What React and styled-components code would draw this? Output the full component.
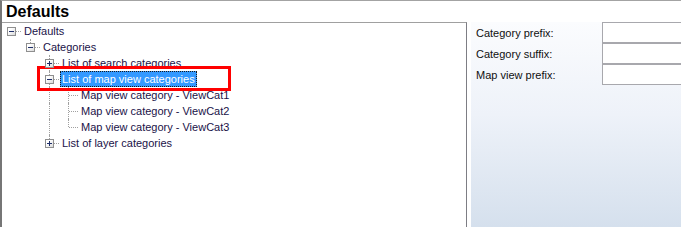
import React from 'react'
import styled, { createGlobalStyle, css } from 'styled-components'

const GlobalStyle = createGlobalStyle`
  html, body {
    margin: 0;
    padding: 0;
    background: #ffffff;
  }
  body {
    font-family: "Liberation Sans", Arial, sans-serif;
    font-size: 11px;
    overflow: hidden;
  }
`

const nodes = [
  { label: 'Defaults', level: 0, expander: 'minus', guides: [], up: false, down: false },
  { label: 'Categories', level: 1, expander: 'minus', guides: [false], up: true, down: false },
  { label: 'List of search categories', level: 2, expander: 'plus', guides: [false, false], up: true, down: true },
  { label: 'List of map view categories', level: 2, expander: 'minus', guides: [false, false], up: true, down: true, selected: true },
  { label: 'Map view category - ViewCat1', level: 3, guides: [false, false, true], up: true, down: true },
  { label: 'Map view category - ViewCat2', level: 3, guides: [false, false, true], up: true, down: true },
  { label: 'Map view category - ViewCat3', level: 3, guides: [false, false, true], up: true, down: false },
  { label: 'List of layer categories', level: 2, expander: 'plus', guides: [false, false], up: true, down: false },
]

const fields = ['Category prefix:', 'Category suffix:', 'Map view prefix:']

export default function App() {
  return (
    <>
      <GlobalStyle />
      <Window>
        <TitleBar>Defaults</TitleBar>
        <Body>
          <TreePane>
            {nodes.map((node, i) => (
              <TreeRow key={i}>
                {node.guides.map((on, g) => (
                  <Cell key={g} $up={on} $down={on} />
                ))}
                <Cell $up={node.up} $down={node.down} $across>
                  {node.expander && (
                    <Expander>
                      <ExpanderGlyph $plus={node.expander === 'plus'} />
                    </Expander>
                  )}
                </Cell>
                <NodeLabel $selected={node.selected}>{node.label}</NodeLabel>
              </TreeRow>
            ))}
            <Callout />
          </TreePane>
          <PropertyPane>
            <FieldGrid>
              {fields.map((f) => (
                <React.Fragment key={f}>
                  <FieldLabel>{f}</FieldLabel>
                  <FieldInput />
                </React.Fragment>
              ))}
            </FieldGrid>
          </PropertyPane>
        </Body>
      </Window>
    </>
  )
}

const Window = styled.div`
  display: flex;
  flex-direction: column;
  width: 681px;
  height: 227px;
  box-sizing: border-box;
  border-left: 2px solid #767676;
  border-top: 1px solid #a3a3a3;
  background: #ffffff;
`

const TitleBar = styled.div`
  height: 21px;
  padding-left: 4px;
  font-size: 16px;
  font-weight: bold;
  line-height: 21px;
  color: #000000;
`

const Body = styled.div`
  flex: 1;
  display: flex;
  gap: 4px;
  min-height: 0;
`

const TreePane = styled.div`
  position: relative;
  width: 465px;
  border-top: 1px solid #a0a0a0;
  border-right: 1px solid #7d7d84;
  box-sizing: border-box;
  padding-left: 0;
  display: flex;
  flex-direction: column;
`

const TreeRow = styled.div`
  display: flex;
  height: 16px;
  align-items: stretch;
`

const Cell = styled.div`
  position: relative;
  width: 19px;
  flex: none;

  &::before {
    content: '';
    position: absolute;
    left: 9px;
    width: 0;
    border-left: 1px dotted #a0a0a0;
    ${p => p.$up && p.$down && css`top: 0; bottom: 0;`}
    ${p => p.$up && !p.$down && css`top: 0; height: 8px;`}
    ${p => !p.$up && p.$down && css`top: 8px; bottom: 0;`}
    ${p => !p.$up && !p.$down && css`display: none;`}
  }

  &::after {
    content: '';
    position: absolute;
    top: 8px;
    left: 10px;
    width: 9px;
    height: 0;
    border-top: 1px dotted #a0a0a0;
    ${p => !p.$across && css`display: none;`}
  }
`

const Expander = styled.div`
  position: absolute;
  z-index: 1;
  left: 5px;
  top: 4px;
  width: 9px;
  height: 9px;
  box-sizing: border-box;
  border: 1px solid #8f8f8f;
  background: linear-gradient(135deg, #ffffff 30%, #d9d9d9);
  display: flex;
  align-items: center;
  justify-content: center;
`

const ExpanderGlyph = styled.div`
  position: relative;
  width: 5px;
  height: 1px;
  background: #1f2f6a;

  ${p => p.$plus && css`
    &::after {
      content: '';
      position: absolute;
      left: 2px;
      top: -2px;
      width: 1px;
      height: 5px;
      background: #1f2f6a;
    }
  `}
`

const NodeLabel = styled.div`
  height: 16px;
  box-sizing: border-box;
  padding: 0 1px;
  margin-left: 1px;
  border: 1px solid transparent;
  line-height: 14px;
  white-space: nowrap;
  color: #1a1248;

  ${p => p.$selected && css`
    background: #3399ff;
    color: #ffffff;
    border: 1px dotted #1a1a1a;
  `}
`

const Callout = styled.div`
  position: absolute;
  left: 35px;
  top: 43px;
  width: 194px;
  height: 25px;
  box-sizing: border-box;
  border: 3px solid #ff0000;
  pointer-events: none;
`

const PropertyPane = styled.div`
  flex: 1;
  padding-left: 5px;
  background: linear-gradient(180deg, #fbfcfe 0%, #eef2f9 45%, #d5e0ed 100%);
`

const FieldGrid = styled.div`
  display: grid;
  grid-template-columns: 126px 1fr;
  grid-auto-rows: 21px;
`

const FieldLabel = styled.div`
  display: flex;
  align-items: center;
  padding-top: 1px;
  color: #101010;
  white-space: nowrap;
`

const FieldInput = styled.div`
  box-sizing: border-box;
  border: 1px solid #a8a8ad;
  border-right: none;
  background: #ffffff;
`
